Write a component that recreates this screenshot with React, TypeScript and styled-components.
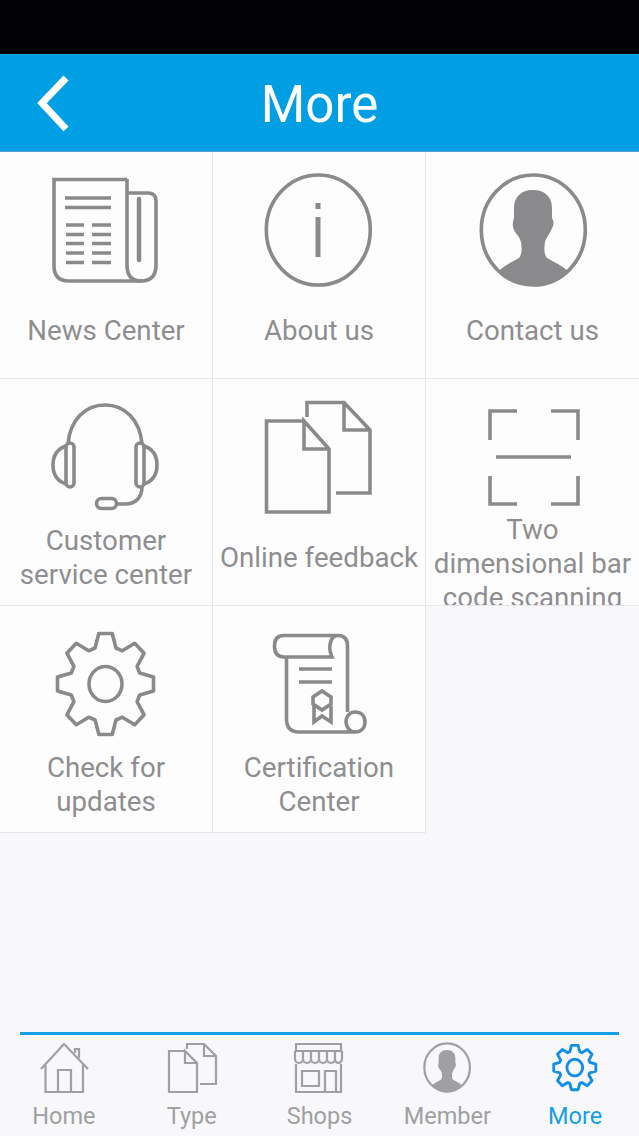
import styled, { createGlobalStyle } from "styled-components";
import type { ReactNode } from "react";

const GlobalStyle = createGlobalStyle`
    html, body {
        margin: 0;
        padding: 0;
        background: #f8f8fa;
    }
    * {
        box-sizing: border-box;
    }
`;

const Page = styled.div`
    width: 639px;
    height: 1136px;
    display: flex;
    flex-direction: column;
    font-family: Roboto, "Liberation Sans", sans-serif;
    background: #f8f8fa;
    overflow: hidden;
`;

const StatusBar = styled.div`
    height: 54px;
    background: #020106;
`;

const Header = styled.header`
    height: 98px;
    flex: none;
    display: grid;
    grid-template-columns: 1fr;
    align-items: center;
    justify-items: center;
    background: #009fe4;
    border-bottom: 1px solid #4fa8d6;
    color: #ffffff;
`;

const BackIcon = styled.svg`
    grid-area: 1 / 1;
    justify-self: start;
    width: 44px;
    height: 64px;
    margin-left: 30px;
`;

const Title = styled.h1`
    grid-area: 1 / 1;
    margin: 4px 0 0;
    font-size: 51px;
    font-weight: 400;
    line-height: 1;
`;

const Grid = styled.div`
    display: grid;
    grid-template-columns: repeat(3, 213px);
    grid-auto-rows: 227px;
    height: 681px;
    flex: none;
`;

const Cell = styled.div`
    display: flex;
    flex-direction: column;
    align-items: center;
    padding-top: 22px;
    overflow: hidden;
    background: #fdfdfe;
    border-right: 1px solid #e6e7eb;
    border-bottom: 1px solid #e6e7eb;
    &:nth-child(3n) {
        border-right: none;
    }
`;

const CellIcon = styled.svg`
    width: 114px;
    height: 114px;
    flex: none;
    fill: none;
    overflow: visible;
    stroke: #8a8a8c;
    stroke-width: 3.6;
`;

const CellLabel = styled.div`
    flex: none;
    height: 90px;
    width: 100%;
    padding: 0 4px;
    margin-top: -2px;
    display: flex;
    flex-direction: column;
    justify-content: safe center;
    text-align: center;
    font-size: 27.7px;
    line-height: 34px;
    color: #8e8e90;
`;

const Spacer = styled.div`
    flex: 1;
`;

const TabBar = styled.nav`
    height: 104px;
    flex: none;
    display: grid;
    grid-template-columns: repeat(5, 1fr);
    position: relative;
    padding-top: 11px;
    &::before {
        content: "";
        position: absolute;
        top: 0;
        left: 20px;
        right: 20px;
        height: 3px;
        background: #169ee6;
    }
`;

const Tab = styled.div<{ $active?: boolean }>`
    display: flex;
    flex-direction: column;
    align-items: center;
    font-size: 23.5px;
    line-height: 32px;
    color: ${(props) => (props.$active ? "#169ee6" : "#a0a0a2")};
`;

const TabIcon = styled.svg<{ $active?: boolean; $stroke?: number }>`
    width: 50px;
    height: 50px;
    margin-bottom: 7px;
    flex: none;
    fill: none;
    overflow: visible;
    stroke: ${(props) => (props.$active ? "#0f8fe8" : "#a0a0a2")};
    stroke-width: ${(props) => props.$stroke ?? 2.2};
`;

const gearPath = (cx: number, cy: number, tip: number, root: number, tipHalf: number, rootHalf: number) => {
    // the reference is a little taller than wide, so x is squeezed
    const point = (angle: number, along: number, radius: number) => {
        const x = cx + (Math.sin(angle) * radius + Math.cos(angle) * along) * 0.95;
        const y = cy - Math.cos(angle) * radius + Math.sin(angle) * along;
        return `${x.toFixed(1)},${y.toFixed(1)}`;
    };
    let d = "";
    for (let i = 0; i < 8; i++) {
        const a = (i * Math.PI) / 4;
        d += `${i === 0 ? "M" : "L"}${point(a, -rootHalf, root)} L${point(a, -tipHalf, tip)} L${point(a, tipHalf, tip)} L${point(a, rootHalf, root)} `;
    }
    return d + "Z";
};

const silhouette =
    "M532,190 C520,190 513,197 513,208 L513,218 Q510,226 514,232 Q518,236 520,242 C521,250 521,254 518,258 C511,262 504,265 497.6,271 A52,55 0 0 0 567,271 C560,265 553,262 546,258 C543,254 543,250 544,242 C546,236 550,232 551,228 Q554,224 551,218 L551,208 C551,197 544,190 532,190 Z";

const NewsIcon = () => (
    <CellIcon viewBox="49 174 114 114">
        <path d="M127,179.5 H54 V266 Q54,281 69,281 H142" />
        <path d="M127,193 H148 Q156,193 156,201 V265 Q156,281 141,281 Q127,281 127,265 V179" />
        <path strokeWidth="4.5" strokeLinecap="round" d="M139,199 V260" />
        <path d="M65,198 H111 M65,207.5 H111 M66,225 H84 M92,225 H111 M66,234.5 H84 M92,234.5 H111 M66,243.5 H84 M92,243.5 H111 M66,253 H84 M92,253 H111 M66,262.5 H84 M92,262.5 H111" />
    </CellIcon>
);

const InfoIcon = () => (
    <CellIcon viewBox="262 174 114 114">
        <ellipse cx="318.3" cy="230" rx="52" ry="55" />
        <path strokeWidth="5" d="M318,203 V209 M318,217 V257" />
    </CellIcon>
);

const PersonIcon = () => (
    <CellIcon viewBox="475 174 114 114">
        <ellipse cx="532.3" cy="230" rx="52" ry="55" />
        <path d={silhouette} fill="#8a8a8c" stroke="none" />
    </CellIcon>
);

const HeadsetIcon = () => (
    <CellIcon viewBox="49 401 114 114">
        <path d="M68,444 C70,420 85,405 105,405 C125,405 140,420 142,444" />
        <rect x="66" y="443" width="8" height="44" rx="4" />
        <rect x="136" y="443" width="8" height="44" rx="4" />
        <path d="M66,446 C57,449 53,456 53,465 C53,474 57,481 66,484" />
        <path d="M144,446 C153,449 157,456 157,465 C157,474 153,481 144,484" />
        <path d="M142,487 C142,498 135,504 125,504 H116" />
        <rect x="96.5" y="498.5" width="20" height="10" rx="5" />
    </CellIcon>
);

const DocsIcon = () => (
    <CellIcon viewBox="262 401 114 114">
        <path d="M304,421 H266.5 V512 H329 V449 L304,421 V449 H329" />
        <path d="M307,417 V402.5 H344 L370,430 V493 H336 M344,403 V430 H370" />
    </CellIcon>
);

const ScanIcon = () => (
    <CellIcon viewBox="475 401 114 114">
        <path d="M516,411 H489 V440 M550,411 H577 V440 M489,476 V504 H516 M577,476 V504 H550 M495,457 H570" />
    </CellIcon>
);

const GearIcon = () => (
    <CellIcon viewBox="49 628 114 114">
        <path strokeLinejoin="round" d={gearPath(105.5, 684, 50.5, 36, 7, 11)} />
        <ellipse cx="105.5" cy="684" rx="16.5" ry="17.5" />
    </CellIcon>
);

const CertIcon = () => (
    <CellIcon viewBox="262 628 114 114">
        <path d="M338,635.5 H284 Q274.5,635.5 274.5,646 Q274.5,657 284,657 H332 Q328,648 331,641 Q333,635.5 338,635.5 Q347.5,635.5 347.5,646 V712" />
        <path d="M286.5,657 V719 Q286.5,732 299,732 H355 C361,732 365,728 365,722 C365,716 361,712 355,712 C349,712 346,717 346,722 C346,727 350,732 355,732" />
        <path d="M299,669 H332 M299,682 H332" />
        <path d="M322,691 L331,697 V704 L322,710 L313,704 V697 Z" />
        <path d="M314,706 V722 L322,716 L331,722 V706" />
    </CellIcon>
);

const items: { label: ReactNode; icon: ReactNode }[] = [
    { label: "News Center", icon: <NewsIcon /> },
    { label: "About us", icon: <InfoIcon /> },
    { label: "Contact us", icon: <PersonIcon /> },
    { label: "Customer service center", icon: <HeadsetIcon /> },
    { label: "Online feedback", icon: <DocsIcon /> },
    { label: "Two dimensional bar code scanning", icon: <ScanIcon /> },
    { label: "Check for updates", icon: <GearIcon /> },
    { label: "Certification Center", icon: <CertIcon /> },
];

function App() {
    return (
        <Page>
            <GlobalStyle />
            <StatusBar />
            <Header>
                <BackIcon viewBox="0 0 44 64">
                    <path d="M36,7 L12,32 L36,58" fill="none" stroke="#ffffff" strokeWidth="7" />
                </BackIcon>
                <Title>More</Title>
            </Header>
            <Grid>
                {items.map((item, i) => (
                    <Cell key={i}>
                        {item.icon}
                        <CellLabel>
                            <div>{item.label}</div>
                        </CellLabel>
                    </Cell>
                ))}
            </Grid>
            <Spacer />
            <TabBar>
                <Tab>
                    <TabIcon viewBox="38 1044 50 50">
                        <path d="M40,1070 L63,1045 L87,1070 M44.5,1064 V1093 H82 V1064 M57,1093 V1071 H70 V1093 M74,1054 V1050 H78 V1059" />
                    </TabIcon>
                    Home
                </Tab>
                <Tab>
                    <TabIcon viewBox="166 1044 50 50">
                        <path d="M184,1052 H168 V1093 H196 V1064 L184,1052 V1064 H196" />
                        <path d="M186,1050 V1045 H203 L215,1057 V1085 H199 M203,1045 V1057 H215" />
                    </TabIcon>
                    Type
                </Tab>
                <Tab>
                    <TabIcon viewBox="295 1044 50 50">
                        <path d="M297,1052 V1045 H342 V1052 M296,1052 H343 M297,1065 V1093 H342 V1065" />
                        <path d="M296,1052 V1060 A3.9,3.9 0 0 0 304,1060 V1052 M304,1060 A3.9,3.9 0 0 0 312,1060 V1052 M312,1060 A3.9,3.9 0 0 0 320,1060 V1052 M320,1060 A3.9,3.9 0 0 0 328,1060 V1052 M328,1060 A3.9,3.9 0 0 0 336,1060 V1052 M336,1060 A3.5,3.9 0 0 0 343,1060 V1052" />
                        <path d="M303,1072 H320 V1087 H303 Z M326,1093 V1072 H337 V1093" />
                    </TabIcon>
                    Shops
                </Tab>
                <Tab>
                    <TabIcon viewBox="475 174 114 114" $stroke={5}>
                        <ellipse cx="532.3" cy="230" rx="52" ry="55" />
                        <path d={silhouette} fill="#a0a0a2" stroke="none" />
                    </TabIcon>
                    Member
                </Tab>
                <Tab $active>
                    <TabIcon $active viewBox="49 628 114 114" $stroke={6.5}>
                        <path strokeLinejoin="round" d={gearPath(105.5, 684, 50.5, 36, 8, 12)} />
                        <ellipse cx="105.5" cy="684" rx="18" ry="19" />
                    </TabIcon>
                    More
                </Tab>
            </TabBar>
        </Page>
    );
}

export default App;
